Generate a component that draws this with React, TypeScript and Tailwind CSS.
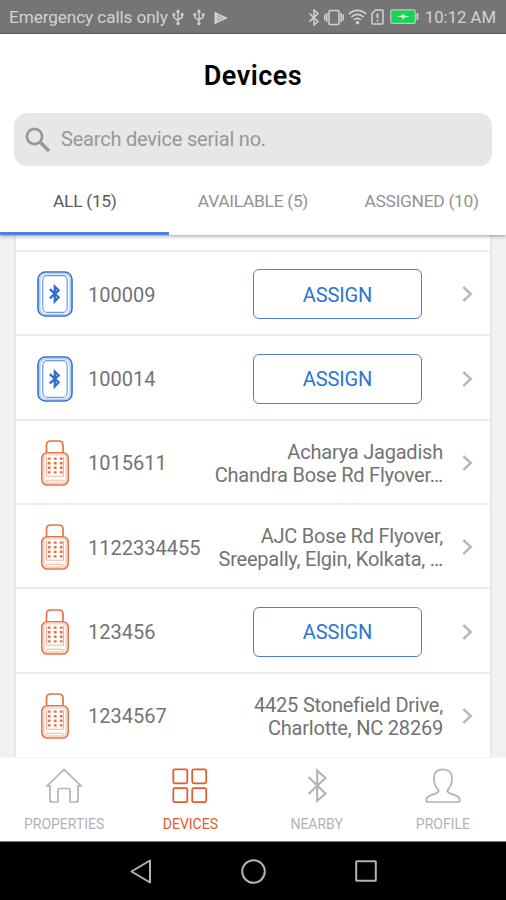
import type { ReactNode } from 'react';
import clsx from 'clsx';

type DeviceKind = 'bluetooth' | 'keypad';

interface Device {
  serial: string;
  kind: DeviceKind;
  address?: string[];
}

const DEVICES: Device[] = [
  { serial: '100009', kind: 'bluetooth' },
  { serial: '100014', kind: 'bluetooth' },
  { serial: '1015611', kind: 'keypad', address: ['Acharya Jagadish', 'Chandra Bose Rd Flyover…'] },
  { serial: '1122334455', kind: 'keypad', address: ['AJC Bose Rd Flyover,', 'Sreepally, Elgin, Kolkata, …'] },
  { serial: '123456', kind: 'keypad' },
  { serial: '1234567', kind: 'keypad', address: ['4425 Stonefield Drive,', 'Charlotte, NC 28269'] },
];

const TABS = ['ALL (15)', 'AVAILABLE (5)', 'ASSIGNED (10)'];

function UsbIcon() {
  return (
    <svg width="12" height="17" viewBox="0 0 12 17" fill="none" stroke="currentColor" strokeWidth="1.4">
      <path d="M6 2v12M1.8 5.5v3L6 11.5M10.2 5.5v3L6 10.5" />
      <path d="M6 0 3.8 3.4h4.4Z" fill="currentColor" stroke="none" />
      <circle cx="6" cy="14.6" r="1.7" fill="currentColor" stroke="none" />
      <path d="M.4 4.2h2.8v2.6H.4zM8.8 4.2h2.8v2.6H8.8z" fill="currentColor" stroke="none" />
    </svg>
  );
}

function StatusBar() {
  return (
    <div className="flex h-[34px] shrink-0 items-center border-b border-[#676767] bg-[#757575] pl-[9px] pr-[10px] pt-[2px] text-[#d2d2d2]">
      <span className="w-[163px] whitespace-nowrap pt-px text-[17.2px] leading-none tracking-[-0.1px]">Emergency calls only</span>
      <div className="flex items-center gap-[9px]">
        <UsbIcon />
        <UsbIcon />
        <svg width="14" height="14" viewBox="0 0 14 14">
          <path d="M.5.8v12.4L14 7Z" fill="currentColor" />
          <path d="M3 4l6 3-6 3M6 4.5 3 7l3 2.5" fill="none" stroke="#9a9a9a" strokeWidth=".8" />
        </svg>
      </div>
      <div className="ml-auto flex items-center">
        <svg width="12" height="17" viewBox="0 0 12 17" fill="none" stroke="currentColor" strokeWidth="1.5">
          <path d="m1.5 4.5 8.5 8L6 16V1l4 3.6-8.5 8" />
        </svg>
        <svg className="ml-[4px]" width="20" height="17" viewBox="0 0 20 17" fill="none" stroke="currentColor" strokeWidth="1.5">
          <rect x="5" y="1.5" width="10" height="14" rx="1" />
          <path d="M2.8 4v9M17.2 4v9M.8 5.5v6M19.2 5.5v6" />
        </svg>
        <svg className="ml-[4px]" width="19" height="16" viewBox="0 0 19 16" fill="none" stroke="currentColor" strokeWidth="1.7">
          <path d="M.8 5.2c5-5 12.4-5 17.4 0M3.4 8.1c3.6-3.6 8.6-3.6 12.2 0M6 11c2.2-2.1 4.8-2.1 7 0" />
          <circle cx="9.5" cy="13.7" r="1.8" fill="currentColor" stroke="none" />
        </svg>
        <svg className="ml-[4px]" width="13" height="16" viewBox="0 0 13 16" fill="none" stroke="currentColor" strokeWidth="1.5">
          <path d="M1 4.8 4.5 1H11q1 0 1 1v12q0 1-1 1H2q-1 0-1-1Z" />
          <path d="M6.5 4.5v4.7M6.5 10.8v1.8" strokeWidth="1.8" />
        </svg>
        <svg className="ml-[6px]" width="29" height="16" viewBox="0 0 29 16">
          <rect x=".7" y=".8" width="24.6" height="13.6" rx="2" fill="#13d455" stroke="#c6c6c6" strokeWidth="1.2" />
          <path d="M27.4 4v7" stroke="currentColor" strokeWidth="1.8" />
          <path d="m6.5 7.3 5.5-.9 1.2-2.2 1 2.4 5.3 1-5.3 1-1.2 2.2-1-2.5Z" fill="#e5ffec" />
        </svg>
        <span className="ml-[6px] whitespace-nowrap pt-[2px] text-[16.7px] leading-none">10:12 AM</span>
      </div>
    </div>
  );
}

function BluetoothLockIcon() {
  return (
    <svg width="36" height="46" viewBox="0 0 36 46" fill="none" stroke="#2f70cf">
      <rect x="1" y="1" width="34" height="44" rx="7.5" strokeWidth="1.6" />
      <rect x="2.8" y="2.8" width="30.4" height="40.4" rx="6" stroke="#b4cff5" strokeWidth="1.6" />
      <rect x="5.8" y="4.6" width="24.4" height="36.8" rx="4.5" stroke="#6d9ae0" strokeWidth="1.2" />
      <path d="m12.8 18.2 8.8 8-3.8 4.1V15.5l3.8 3.9-8.8 8" strokeWidth="2.3" />
    </svg>
  );
}

function KeypadLockIcon() {
  return (
    <svg width="36" height="46" viewBox="0 0 36 46" fill="none" stroke="#e37448">
      <path d="M9.5 13V5.2Q9.5 1 13.7 1h8Q26 1 26 5.2V13" strokeWidth="1.7" />
      <rect x="4.8" y="12.7" width="26.4" height="32.3" rx="5.5" strokeWidth="1.6" />
      <rect x="6.8" y="14.6" width="22.4" height="28.4" rx="4" stroke="#f8d5c8" strokeWidth="1.8" />
      <path d="M9.5 17v19.2h17V17M9.5 42q0-1.8 2-1.8h13q2 0 2 1.8" stroke="#f0b49c" strokeWidth="1" />
      <path d="M10.8 18.6h15M10.8 23.2h15M10.8 27.8h15M10.8 32.4h15" strokeWidth="2.4" strokeDasharray="2.8 3.2" />
    </svg>
  );
}

function DeviceRow({ device }: { device: Device }) {
  return (
    <li className="flex h-[84.35px] shrink-0 items-center border-t-2 border-[#ececec] pl-[21px] pr-[17px] pt-[2px] text-[#737373]">
      {device.kind === 'bluetooth' ? <BluetoothLockIcon /> : <KeypadLockIcon />}
      <span className="ml-[15px] pt-px text-[20px] leading-none">{device.serial}</span>
      {device.address ? (
        <div className="ml-auto whitespace-nowrap pt-[2px] text-right text-[20px] leading-[23px] tracking-[-0.21px]">
          {device.address.map((line) => (
            <div key={line}>{line}</div>
          ))}
        </div>
      ) : (
        <button className="ml-auto h-[50px] w-[169px] rounded-[6px] border-[1.5px] border-[#4a80dc] pt-px text-[20px] tracking-[-0.1px] text-[#2a76d4]">
          ASSIGN
        </button>
      )}
      <svg
        className={clsx('shrink-0', device.address ? 'ml-[18px]' : 'ml-[39px]')}
        width="12"
        height="18"
        viewBox="0 0 12 18"
        fill="none"
        stroke="#b8b8b8"
        strokeWidth="2.4"
      >
        <path d="m2.3 2 7.5 7-7.5 7" />
      </svg>
    </li>
  );
}

function NavItem({ label, active, children }: { label: string; active?: boolean; children: ReactNode }) {
  return (
    <div className={clsx('flex flex-1 flex-col items-center pt-[10px]', active ? 'text-[#e4592b]' : 'text-[#b3b3b3]')}>
      <svg width="36" height="36" viewBox="0 0 36 36" fill="none" stroke="currentColor" strokeWidth="1.7">
        {children}
      </svg>
      <span className="mt-[13px] text-[14px] leading-none">{label}</span>
    </div>
  );
}

export default function App() {
  return (
    <div className="flex h-[900px] w-[506px] flex-col overflow-hidden bg-[#f2f2f2] font-[Roboto,sans-serif]">
      <StatusBar />

      <header className="z-10 flex h-[201px] shrink-0 flex-col bg-white shadow-[0_1px_4px_rgba(0,0,0,0.4)]">
        <h1 className="pt-[28px] text-center text-[27px] font-semibold leading-[28px] tracking-[0.5px] text-black">Devices</h1>
        <div className="mx-[14px] mt-[23px] flex h-[53px] items-center rounded-[13px] bg-[#e7e7e7] pl-[11px] text-[#979797]">
          <svg width="26" height="26" viewBox="0 0 26 26" fill="none" stroke="currentColor" strokeWidth="2.7">
            <circle cx="9.5" cy="9.5" r="7.6" />
            <path d="m15 15 9 9" strokeWidth="3.4" />
          </svg>
          <span className="ml-[10px] pb-[2px] text-[20px] leading-none tracking-[-0.2px]">Search device serial no.</span>
        </div>
        <div className="grid flex-1 grid-cols-3">
          {TABS.map((tab, i) => (
            <div
              key={tab}
              className={clsx(
                'border-b-[3px] pt-[25px] text-center text-[17.4px] leading-[20px] tracking-[-0.3px]',
                i === 0 ? 'border-[#4a80e8] pl-px text-[#5a5a5a]' : 'border-transparent text-[#929292]',
              )}
            >
              {tab}
            </div>
          ))}
        </div>
      </header>

      <main className="h-[522px] shrink-0 overflow-hidden px-[14px]">
        <ul className="flex h-full flex-col border-x-2 border-[#e8e8e8] bg-white pt-[15px]">
          {DEVICES.map((device) => (
            <DeviceRow key={device.serial} device={device} />
          ))}
        </ul>
      </main>

      <nav className="z-10 flex h-[84px] shrink-0 border-t border-[#f3f3f3] bg-white pl-px">
        <NavItem label="PROPERTIES">
          <path d="M1 18 18 1.5 35 18h-3v14q0 2-2 2h-5q-1 0-1-1V22q0-1.5-1.5-1.5h-9Q12 20.5 12 22v11q0 1-1 1H6q-2 0-2-2V18Z" />
        </NavItem>
        <NavItem label="DEVICES" active>
          <rect x="1.3" y="1.3" width="14" height="14" rx="1.5" />
          <rect x="20.2" y="1.3" width="14" height="14" rx="1.5" />
          <rect x="1.3" y="20.2" width="14" height="14" rx="1.5" />
          <rect x="20.2" y="20.2" width="14" height="14" rx="1.5" />
        </NavItem>
        <NavItem label="NEARBY">
          <path d="m9.5 9 17 16.5-8.3 7.5V2.5l8.3 7.5-17 16" strokeWidth="2.1" />
        </NavItem>
        <NavItem label="PROFILE">
          <path d="M18 1.3c-5.8 0-9 3.2-9 8.7 0 5.8 1.5 9.5 4.5 12 .6 2-.5 2.6-2.5 3.4l-6 2.2c-2.5 1-3.8 2.2-3.8 4.7 0 1.3.6 1.7 1.8 1.7h30c1.2 0 1.8-.4 1.8-1.7 0-2.5-1.3-3.7-3.8-4.7l-6-2.2c-2-.8-3.1-1.4-2.5-3.4 3-2.5 4.5-6.2 4.5-12 0-5.5-3.2-8.7-9-8.7Z" />
        </NavItem>
      </nav>

      <div className="flex flex-1 items-center justify-center gap-[89px] border-t border-[#777] bg-black text-[#b3b3b3]">
        <svg width="22" height="25" viewBox="0 0 22 25" fill="none" stroke="currentColor" strokeWidth="2" strokeLinejoin="round">
          <path d="M20 1.5v22L1.5 12.5Z" />
        </svg>
        <svg width="25" height="25" viewBox="0 0 25 25" fill="none" stroke="currentColor" strokeWidth="2">
          <circle cx="12.5" cy="12.5" r="11.3" />
        </svg>
        <svg width="22" height="22" viewBox="0 0 22 22" fill="none" stroke="currentColor" strokeWidth="2">
          <rect x="1.2" y="1.2" width="19.6" height="19.6" rx=".5" />
        </svg>
      </div>
    </div>
  );
}
